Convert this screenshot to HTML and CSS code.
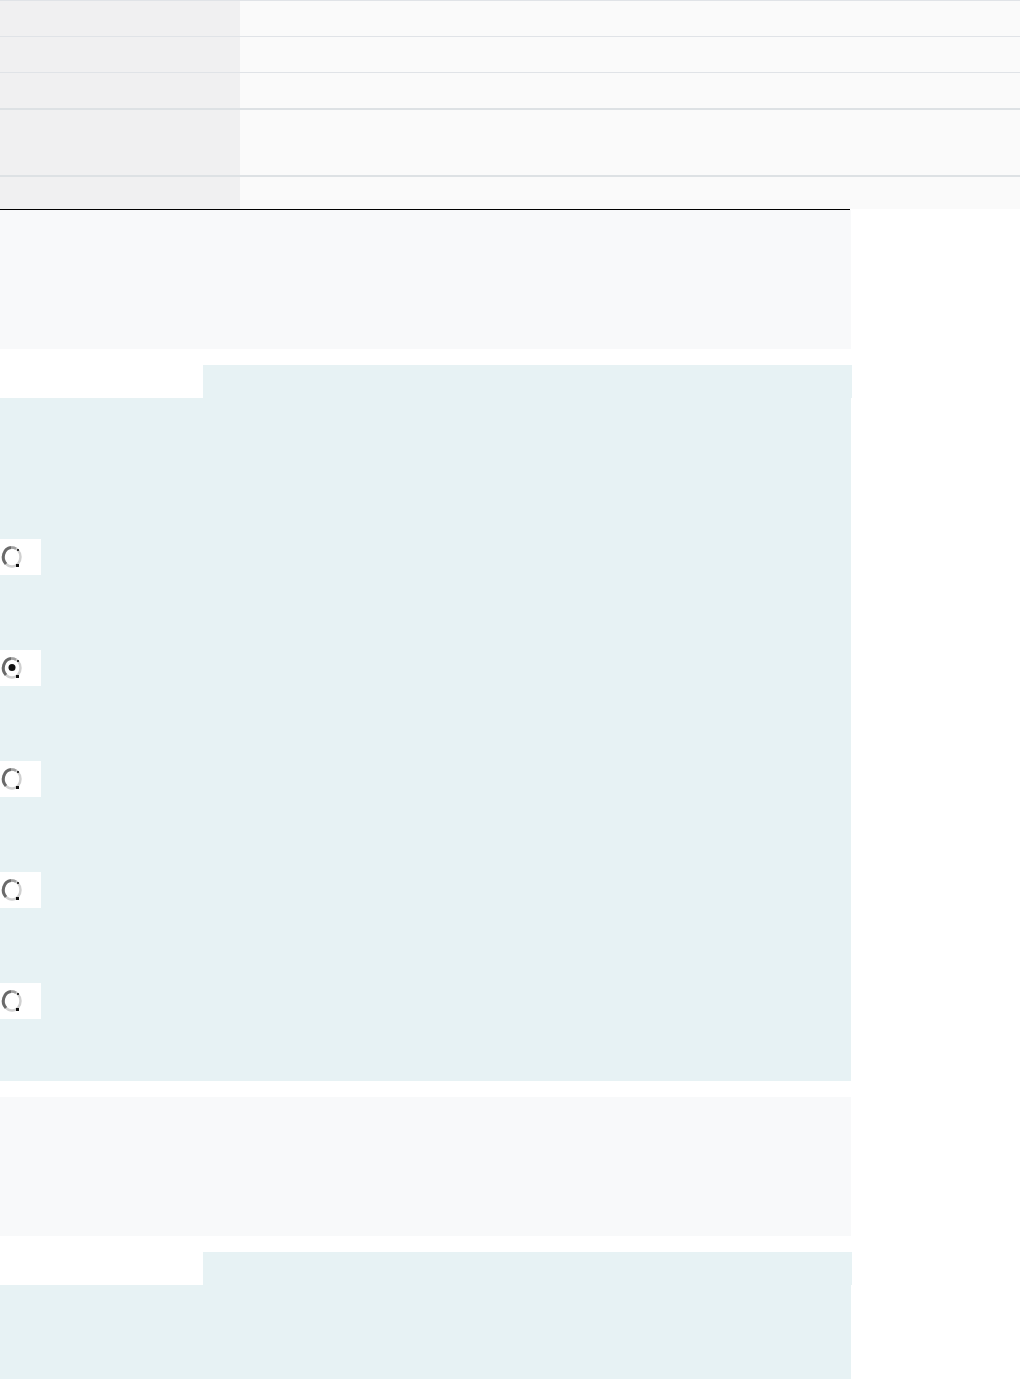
FILE: index.html
```html
<!DOCTYPE html>
<html>
<head>
<meta charset="utf-8">
<link rel="stylesheet" href="styles.css">
</head>
<body>
<div class="table">
  <div class="row r1"><div class="key"></div><div class="val"></div></div>
  <div class="row"><div class="key"></div><div class="val"></div></div>
  <div class="row"><div class="key"></div><div class="val"></div></div>
  <div class="row thick tall"><div class="key"></div><div class="val"></div></div>
  <div class="row thick last"><div class="key"></div><div class="val"></div></div>
</div>
<div class="rule"></div>
<div class="gray-block"></div>
<div class="section">
  <div class="tabs"><div class="tab-blank"></div><div class="tab-fill"></div></div>
  <div class="body first">
    <div class="opt"><svg width="24" height="26" viewBox="0 0 24 26"><ellipse cx="12" cy="13" rx="8.5" ry="9.5" fill="#fff" stroke="#d0d0d0" stroke-width="2.5"/><path d="M6 20 A8.5 9.5 0 0 1 11 3.6" fill="none" stroke="#6a6a6a" stroke-width="3"/><path d="M11 3.6 A8.5 9.5 0 0 1 16 4.8" fill="none" stroke="#a0a0a0" stroke-width="2.5"/><rect x="16" y="20" width="3" height="3" fill="#111"/><rect x="17" y="5" width="2" height="2" fill="#333"/></svg></div>
    <div class="opt"><svg width="24" height="26" viewBox="0 0 24 26"><ellipse cx="12" cy="13" rx="8.5" ry="9.5" fill="#fff" stroke="#d0d0d0" stroke-width="2.5"/><path d="M6 20 A8.5 9.5 0 0 1 11 3.6" fill="none" stroke="#6a6a6a" stroke-width="3"/><path d="M11 3.6 A8.5 9.5 0 0 1 16 4.8" fill="none" stroke="#a0a0a0" stroke-width="2.5"/><rect x="16" y="20" width="3" height="3" fill="#111"/><rect x="17" y="5" width="2" height="2" fill="#333"/><circle cx="12" cy="12.5" r="3.5" fill="#111"/></svg></div>
    <div class="opt"><svg width="24" height="26" viewBox="0 0 24 26"><ellipse cx="12" cy="13" rx="8.5" ry="9.5" fill="#fff" stroke="#d0d0d0" stroke-width="2.5"/><path d="M6 20 A8.5 9.5 0 0 1 11 3.6" fill="none" stroke="#6a6a6a" stroke-width="3"/><path d="M11 3.6 A8.5 9.5 0 0 1 16 4.8" fill="none" stroke="#a0a0a0" stroke-width="2.5"/><rect x="16" y="20" width="3" height="3" fill="#111"/><rect x="17" y="5" width="2" height="2" fill="#333"/></svg></div>
    <div class="opt"><svg width="24" height="26" viewBox="0 0 24 26"><ellipse cx="12" cy="13" rx="8.5" ry="9.5" fill="#fff" stroke="#d0d0d0" stroke-width="2.5"/><path d="M6 20 A8.5 9.5 0 0 1 11 3.6" fill="none" stroke="#6a6a6a" stroke-width="3"/><path d="M11 3.6 A8.5 9.5 0 0 1 16 4.8" fill="none" stroke="#a0a0a0" stroke-width="2.5"/><rect x="16" y="20" width="3" height="3" fill="#111"/><rect x="17" y="5" width="2" height="2" fill="#333"/></svg></div>
    <div class="opt"><svg width="24" height="26" viewBox="0 0 24 26"><ellipse cx="12" cy="13" rx="8.5" ry="9.5" fill="#fff" stroke="#d0d0d0" stroke-width="2.5"/><path d="M6 20 A8.5 9.5 0 0 1 11 3.6" fill="none" stroke="#6a6a6a" stroke-width="3"/><path d="M11 3.6 A8.5 9.5 0 0 1 16 4.8" fill="none" stroke="#a0a0a0" stroke-width="2.5"/><rect x="16" y="20" width="3" height="3" fill="#111"/><rect x="17" y="5" width="2" height="2" fill="#333"/></svg></div>
  </div>
</div>
<div class="gray-block second"></div>
<div class="section">
  <div class="tabs"><div class="tab-blank"></div><div class="tab-fill"></div></div>
  <div class="body tail"></div>
</div>
</body>
</html>
```

FILE: styles.css
```css
html, body {
  margin: 0;
  padding: 0;
  background: #ffffff;
  font-family: "Liberation Sans", Arial, sans-serif;
}
.table {
  width: 1020px;
}
.row {
  display: flex;
  height: 35px;
  border-top: 1px solid #e0e3e7;
}
.row.thick {
  border-top: 2px solid #dde1e4;
}
.row.tall {
  height: 65px;
}
.row.last {
  height: 32px;
}
.key {
  width: 240px;
  background: #f0f0f1;
}
.val {
  flex: 1;
  background: #fafafa;
}
.rule {
  width: 850px;
  height: 1px;
  background: #000;
}
.gray-block {
  width: 851px;
  height: 139px;
  background: #f8f9fa;
}
.section {
  margin-top: 16px;
  width: 852px;
}
.section + .gray-block {
  margin-top: 16px;
}
.tabs {
  display: flex;
  height: 33px;
}
.tab-blank {
  width: 203px;
  background: #fff;
}
.tab-fill {
  flex: 1;
  background: #e7f2f4;
}
.body {
  width: 851px;
  background: #e7f2f4;
  display: flex;
  flex-direction: column;
  gap: 75px;
}
.body.first {
  padding-top: 141px;
  padding-bottom: 62px;
}
.body.tail {
  height: 120px;
}
.opt {
  width: 41px;
  height: 36px;
  background: #fff;
  display: flex;
  align-items: center;
  box-sizing: border-box;
}
.opt svg {
  display: block;
}
```
